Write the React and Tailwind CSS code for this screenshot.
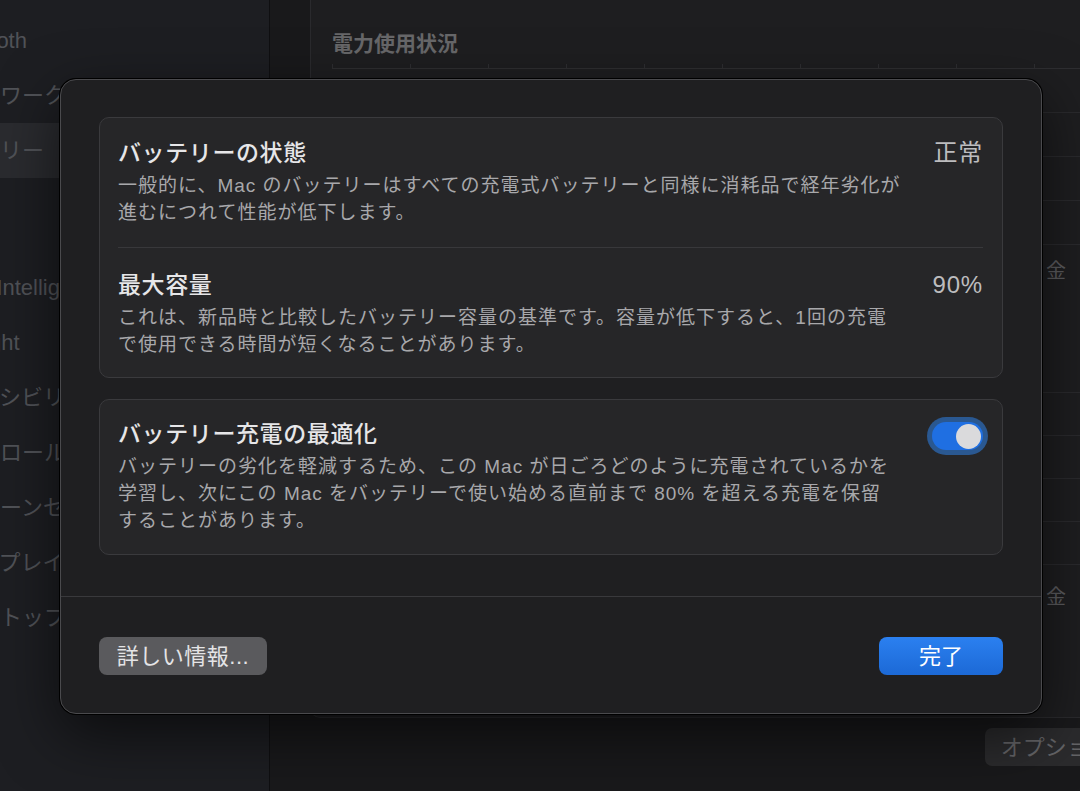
const SIDEBAR_TOP = [
  { label: "Bluetooth" },
  { label: "ネットワーク" },
  { label: "バッテリー", active: true },
];

const SIDEBAR_BOTTOM = [
  "Apple Intelligence と Siri",
  "Spotlight",
  "アクセシビリティ",
  "コントロールセンター",
  "スクリーンセーバー",
  "ディスプレイ",
  "デスクトップとDock",
];

function SidebarItem({ label, active }) {
  return (
    <div className={`flex h-[55px] items-center ${active ? "bg-[#2a2b2f]" : ""}`}>
      <span className="-ml-[66px] whitespace-nowrap text-[22px] text-[#505257]">{label}</span>
    </div>
  );
}

function Sidebar() {
  return (
    <div className="w-[270px] shrink-0 overflow-hidden border-r border-[#0f0f11] bg-[#1d1e22] pt-[13px]">
      {SIDEBAR_TOP.map((item) => (
        <SidebarItem key={item.label} {...item} />
      ))}
      <div className="h-[82px]" />
      {SIDEBAR_BOTTOM.map((label) => (
        <SidebarItem key={label} label={label} />
      ))}
    </div>
  );
}

function ChartRows({ count, height }) {
  return (
    <div>
      {Array.from({ length: count }).map((_, i) => (
        <div key={i} className={`border-b border-[#2a2a2d] ${height}`} />
      ))}
    </div>
  );
}

function Main() {
  return (
    <div className="min-w-0 flex-1 bg-[#19191b] pl-[40px]">
      <div className="w-[835px]">
        <div className="rounded-b-[10px] border-x border-b border-[#2a2a2d] bg-[#1e1e20] pt-[29px]">
          <div className="pl-[21px] text-[21px] font-bold leading-[30px] text-[#676769]">電力使用状況</div>
          {/* chart 1 */}
          <div className="ml-[21px] mt-[5px] flex h-[4px]">
            {Array.from({ length: 10 }).map((_, i) => (
              <div key={i} className="w-[78px] shrink-0 border-l border-[#2e2e31]" />
            ))}
          </div>
          <div className="ml-[21px] border-t border-[#2e2e31]">
            <ChartRows count={4} height="h-[44px]" />
            <div className="flex h-[52px] items-center justify-end pr-[78px] text-[20px] text-[#5c5c5f]">金</div>
          </div>
          {/* chart 2 */}
          <div className="ml-[21px] h-[53px]" />
          <div className="ml-[21px]">
            <ChartRows count={5} height="h-[43px]" />
            <div className="flex h-[64px] items-center justify-end pr-[78px] text-[20px] text-[#5c5c5f]">金</div>
          </div>
          <div className="h-[88px]" />
        </div>
        <div className="mt-[10px] flex justify-end">
          <div className="flex h-[38px] items-center rounded-[7px] bg-[#2b2b2d] px-[16px] text-[22px] text-[#646467]">
            オプション...
          </div>
        </div>
      </div>
    </div>
  );
}

function Row({ title, value, lines }) {
  return (
    <div className="flex justify-between">
      <div>
        <div className="text-[23px] font-medium leading-[30px] tracking-[0.6px] text-[#e6e6e8]">{title}</div>
        <div className="mt-[4px] text-[19px] leading-[27px] tracking-[1px] text-[#a8a8ab]">
          {lines.map((l) => (
            <div key={l} className="whitespace-nowrap">{l}</div>
          ))}
        </div>
      </div>
      {value && <div className="text-[24px] leading-[30px] tracking-[0.8px] text-[#bcbcbe]">{value}</div>}
    </div>
  );
}

function Toggle() {
  return (
    <div className="mt-[3px] flex h-[28px] w-[51px] shrink-0 items-center justify-end rounded-full bg-[#1f6fe2] pr-[2px] shadow-[0_0_0_5px_#2a5891]">
      <div className="h-[25px] w-[25px] rounded-full bg-[#dadadc]" />
    </div>
  );
}

function BatteryDialog() {
  return (
    <div className="absolute left-[60px] top-[79px] w-[982px] rounded-[16px] border border-[#4a4a4d] bg-[#1f1f21] shadow-[0_0_0_1px_#000,0_20px_60px_rgba(0,0,0,0.6)]">
      <div className="px-[38px] pb-[41px] pt-[37px]">
        <div className="rounded-[10px] border border-[#3a3a3d] bg-[#262628] pb-[19px] pl-[18px] pr-[19px] pt-[20px]">
          <Row
            title="バッテリーの状態"
            value="正常"
            lines={[
              "一般的に、Mac のバッテリーはすべての充電式バッテリーと同様に消耗品で経年劣化が",
              "進むにつれて性能が低下します。",
            ]}
          />
          <div className="mb-[22px] mt-[21px] border-t border-[#38383b]" />
          <Row
            title="最大容量"
            value="90%"
            lines={[
              "これは、新品時と比較したバッテリー容量の基準です。容量が低下すると、1回の充電",
              "で使用できる時間が短くなることがあります。",
            ]}
          />
        </div>
        <div className="mt-[21px] flex justify-between rounded-[10px] border border-[#3a3a3d] bg-[#262628] pb-[20px] pl-[18px] pr-[19px] pt-[19px]">
          <Row
            title="バッテリー充電の最適化"
            lines={[
              "バッテリーの劣化を軽減するため、この Mac が日ごろどのように充電されているかを",
              "学習し、次にこの Mac をバッテリーで使い始める直前まで 80% を超える充電を保留",
              "することがあります。",
            ]}
          />
          <Toggle />
        </div>
      </div>
      <div className="flex justify-between border-t border-[#39393c] px-[38px] pb-[38px] pt-[40px]">
        <button className="flex h-[38px] w-[168px] items-center justify-center rounded-[8px] bg-[#5a5a5d] text-[22px] tracking-[0.5px] text-[#e4e4e6]">
          詳しい情報...
        </button>
        <button className="flex h-[38px] w-[124px] items-center justify-center rounded-[8px] bg-gradient-to-b from-[#2b80f0] to-[#1c69d6] text-[22px] text-white">
          完了
        </button>
      </div>
    </div>
  );
}

export default function App() {
  return (
    <div className="relative h-[791px] w-[1080px] overflow-hidden bg-[#19191b] font-['Liberation_Sans','Noto_Sans_CJK_JP',sans-serif]">
      <div className="flex h-full">
        <Sidebar />
        <Main />
      </div>
      <BatteryDialog />
    </div>
  );
}
